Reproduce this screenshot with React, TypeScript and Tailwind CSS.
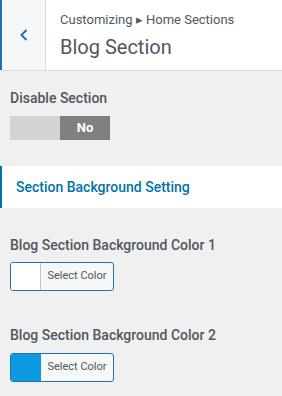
export default function App() {
  return (
    <div className="h-[396px] w-[282px] overflow-hidden bg-[#f0f0f1] font-['Roboto',sans-serif]">
      {/* header */}
      <div className="flex h-[71px] border-b border-[#dcdcde] bg-white">
        <button className="flex w-[46px] items-center justify-center border-l-[2px] border-r border-l-[#2271b1] border-r-[#dcdcde] bg-[#f6f7f7] text-[#2271b1]">
          <svg width="10" height="14" viewBox="0 0 10 14" fill="none">
            <path d="M7.5 2 L2.5 7 L7.5 12" stroke="currentColor" strokeWidth="2" />
          </svg>
        </button>
        <div className="flex flex-col pl-[14px] pt-[11px]">
          <div className="text-[13px] leading-[17px] text-[#50575e]">Customizing ▸ Home Sections</div>
          <div className="mt-[6px] text-[20px] leading-[26px] text-[#50575e]">Blog Section</div>
        </div>
      </div>

      <div className="px-[10px] pt-[17px]">
        <div className="text-[14px] font-medium leading-[20px] text-[#50575e]">Disable Section</div>
        <div className="mt-[8px] flex h-[24px] w-[100px]">
          <div className="w-1/2 bg-[#d3d3d3]" />
          <div className="flex w-1/2 items-center justify-center bg-[#808080] text-[13px] font-bold text-white">No</div>
        </div>
      </div>

      <div className="mt-[26px] flex h-[42px] items-center border-l-[2px] border-[#0073aa] bg-white pl-[14px] text-[14px] font-medium text-[#0073aa]">
        Section Background Setting
      </div>

      <div className="px-[10px]">
        <div className="mt-[27px] text-[14px] font-medium leading-[20px] text-[#50575e]">Blog Section Background Color 1</div>
        <button className="mt-[7px] flex h-[29px] w-[104px] overflow-hidden rounded-[3px] border border-[#2271b1] bg-[#f6f7f7]">
          <span className="h-full w-[30px] border-r border-[#c3c4c7] bg-white" />
          <span className="flex h-full flex-1 items-center justify-center text-[11px] text-[#50575e]">Select Color</span>
        </button>

        <div className="mt-[34px] text-[14px] font-medium leading-[20px] text-[#50575e]">Blog Section Background Color 2</div>
        <button className="mt-[8px] flex h-[29px] w-[104px] overflow-hidden rounded-[3px] border border-[#2271b1] bg-[#f6f7f7]">
          <span className="h-full w-[30px] bg-[#0c9be0]" />
          <span className="flex h-full flex-1 items-center justify-center text-[11px] text-[#50575e]">Select Color</span>
        </button>
      </div>
    </div>
  );
}
